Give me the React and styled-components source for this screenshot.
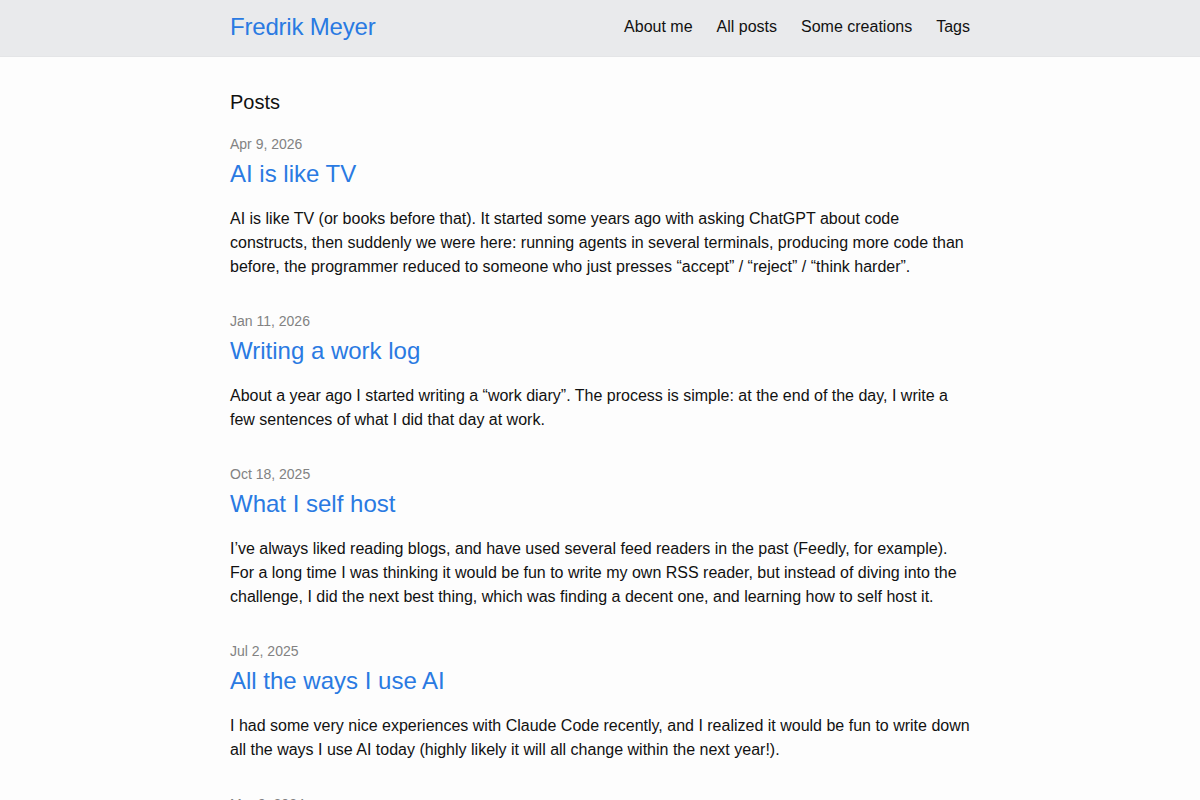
import React from 'react'
import styled, { createGlobalStyle } from 'styled-components'

const GlobalStyle = createGlobalStyle`
  body {
    margin: 0;
    background: #fdfdfd;
    color: #111;
    font-family: "Liberation Sans", Arial, sans-serif;
    font-size: 16px;
    line-height: 1.5;
  }
`

// top bar with title and nav
const Header = styled.header`
  background: #e9eaec;
  border-bottom: 1px solid #e4e5e7;
  height: 57px;
  box-sizing: border-box;
  padding-bottom: 2px;
`

const Wrapper = styled.div`
  max-width: 740px;
  margin: 0 auto;
  display: flex;
  justify-content: space-between;
  align-items: center;
  height: 100%;
`

const SiteTitle = styled.a`
  font-size: 24px;
  color: #2a7ae2;
  text-decoration: none;
  letter-spacing: -0.2px;
`

const Nav = styled.nav`
  display: flex;
  gap: 24px;
`

const NavLink = styled.a`
  color: #111;
  text-decoration: none;
  font-size: 16px;
`

const Main = styled.main`
  max-width: 740px;
  margin: 0 auto;
  padding-top: 30px;
`

const Heading = styled.h2`
  font-size: 20px;
  font-weight: 400;
  line-height: 30px;
  margin: 0 0 17px;
`

const PostList = styled.ul`
  list-style: none;
  margin: 0;
  padding: 0;
`

const Post = styled.li`
  margin-bottom: 31.5px;
`

const PostDate = styled.span`
  display: block;
  font-size: 14px;
  line-height: 21px;
  color: #828282;
`

const PostTitle = styled.a`
  display: block;
  margin-top: 1px;
  font-size: 24px;
  line-height: 36px;
  color: #2a7ae2;
  text-decoration: none;
`

const Excerpt = styled.p`
  margin: 15.4px 0 0;
  line-height: 24px;
`

const posts = [
  {
    date: 'Apr 9, 2026',
    title: 'AI is like TV',
    text: 'AI is like TV (or books before that). It started some years ago with asking ChatGPT about code constructs, then suddenly we were here: running agents in several terminals, producing more code than before, the programmer reduced to someone who just presses \u201caccept\u201d / \u201creject\u201d / \u201cthink harder\u201d.',
  },
  {
    date: 'Jan 11, 2026',
    title: 'Writing a work log',
    text: 'About a year ago I started writing a \u201cwork diary\u201d. The process is simple: at the end of the day, I write a few sentences of what I did that day at work.',
  },
  {
    date: 'Oct 18, 2025',
    title: 'What I self host',
    text: 'I\u2019ve always liked reading blogs, and have used several feed readers in the past (Feedly, for example). For a long time I was thinking it would be fun to write my own RSS reader, but instead of diving into the challenge, I did the next best thing, which was finding a decent one, and learning how to self host it.',
  },
  {
    date: 'Jul 2, 2025',
    title: 'All the ways I use AI',
    text: 'I had some very nice experiences with Claude Code recently, and I realized it would be fun to write down all the ways I use AI today (highly likely it will all change within the next year!).',
  },
  {
    date: 'Mar 9, 2024',
    title: 'Older post',
    text: '',
  },
]

export default function App() {
  return (
    <>
      <GlobalStyle />
      <Header>
        <Wrapper>
          <SiteTitle href="#">Fredrik Meyer</SiteTitle>
          <Nav>
            <NavLink href="#">About me</NavLink>
            <NavLink href="#">All posts</NavLink>
            <NavLink href="#">Some creations</NavLink>
            <NavLink href="#">Tags</NavLink>
          </Nav>
        </Wrapper>
      </Header>
      <Main>
        <Heading>Posts</Heading>
        <PostList>
          {posts.map(p => (
            <Post key={p.date}>
              <PostDate>{p.date}</PostDate>
              <PostTitle href="#">{p.title}</PostTitle>
              {p.text && <Excerpt>{p.text}</Excerpt>}
            </Post>
          ))}
        </PostList>
      </Main>
    </>
  )
}
